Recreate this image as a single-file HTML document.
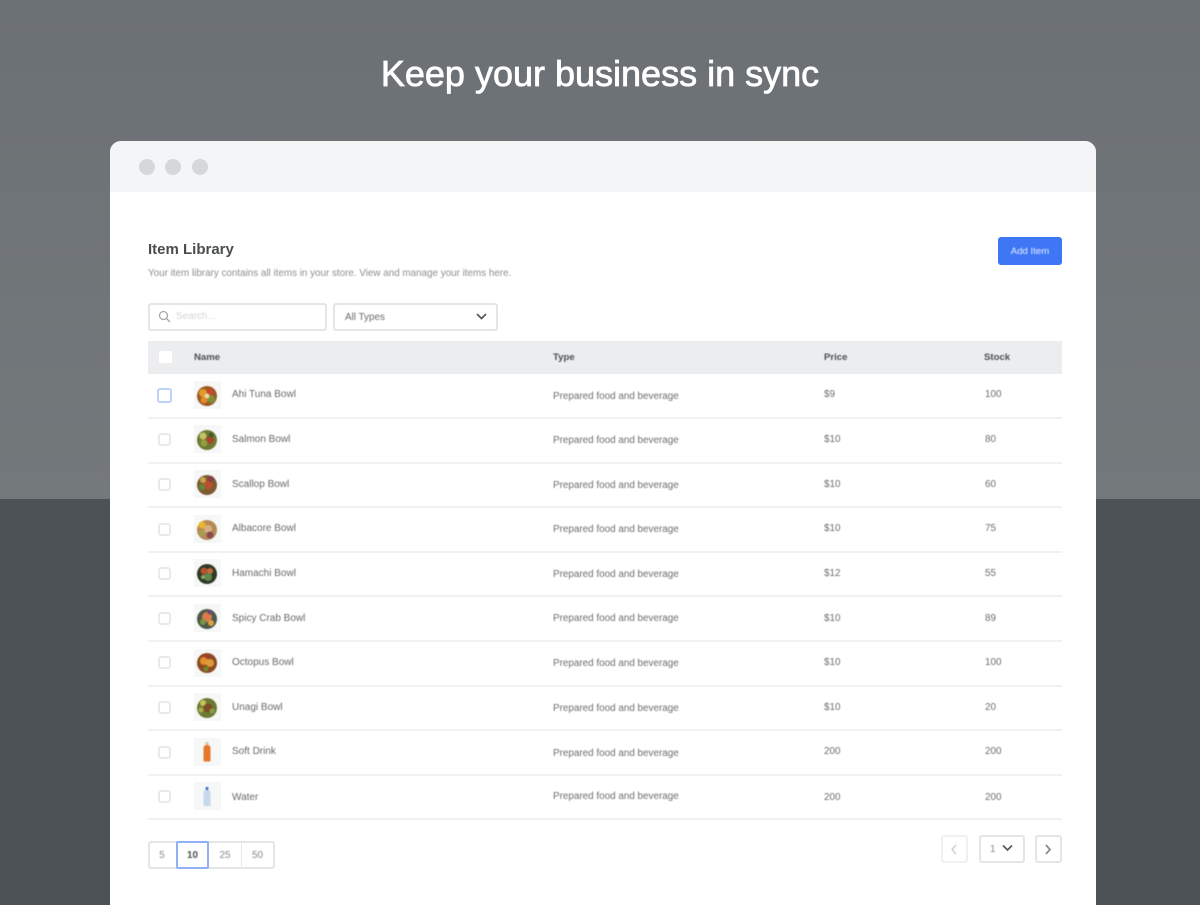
<!DOCTYPE html>
<html><head><meta charset="utf-8"><style>
*{box-sizing:border-box}
html,body{margin:0;padding:0;width:1200px;height:905px;overflow:hidden}
body{font-family:"Liberation Sans",sans-serif}
#p{position:absolute;left:0;top:0;width:1200px;height:905px;overflow:hidden;background:#4d5256}
.a,.t,.l,.c,.th,svg.b{position:absolute}
.top{position:absolute;left:0;top:0;width:1200px;height:499px;background:linear-gradient(#6b7074,#74797c)}
h1{position:absolute;left:0;top:52px;width:1200px;margin:0;text-align:center;color:#fff;font-size:36px;line-height:44px;font-weight:400;-webkit-text-stroke:.75px #fff;filter:blur(.35px)}
.win{position:absolute;left:110px;top:141px;width:986px;height:764px;background:#fff;border-radius:11px 11px 0 0;overflow:hidden}
.bar{position:absolute;left:110px;top:141px;width:986px;height:51px;background:#f3f5f6;border-radius:11px 11px 0 0}
.dot{position:absolute;top:159px;width:16px;height:16px;border-radius:50%;background:#d5d8d9}
.t{font-size:9.9px;line-height:12px;margin-top:1px;color:#6a6d70;white-space:nowrap;filter:blur(.45px)}
.n{font-size:10px;color:#66696c}
.th{font-size:9.6px;line-height:12px;margin-top:1px;color:#4c4f52;font-weight:700;white-space:nowrap;filter:blur(.45px)}
.l{left:148px;width:914px;height:2px;background:#f0f1f2}
.c{left:158px;width:13px;height:13px;border:2px solid #e9ebeb;border-radius:3px;background:#fff}
.im{position:absolute;left:194px;width:27px;height:28px;background:#f6f7f7}
svg.b{left:196px;width:22px;height:22px;filter:blur(.6px)}
.box{position:absolute;background:#fff;border:2px solid #e3e5e6;border-radius:3px}
</style></head><body><div id="p">
<div class="top"></div>
<h1>Keep your business in sync</h1>
<div class="win"></div><div class="bar"></div>
<div class="dot" style="left:139px"></div><div class="dot" style="left:165px"></div><div class="dot" style="left:192px"></div>

<div class="t" style="left:148px;top:240px;font-size:15px;line-height:18px;font-weight:700;color:#4a4d50;filter:blur(.35px)">Item Library</div>
<div class="t" style="left:148px;top:267px;font-size:9.85px;color:#8b8e90">Your item library contains all items in your store. View and manage your items here.</div>

<div class="a" style="left:998px;top:237px;width:64px;height:28px;background:#3e76f6;border-radius:3px"></div>
<div class="t" style="left:998px;top:245px;width:64px;text-align:center;color:#e8efff;font-size:9.6px">Add Item</div>

<div class="box" style="left:148px;top:303px;width:179px;height:28px"></div>
<svg class="a" style="left:158px;top:310px" width="13" height="13" viewBox="0 0 13 13" fill="none" stroke="#a5a8aa" stroke-width="1.3"><circle cx="5.5" cy="5.5" r="4"/><path d="M8.5 8.500l3.500 3.500"/></svg>
<div class="t" style="left:176px;top:310px;color:#d2d4d5">Search...</div>
<div class="box" style="left:333px;top:303px;width:165px;height:28px"></div>
<div class="t" style="left:345px;top:311px;color:#66696c">All Types</div>
<svg class="a" style="left:475px;top:312px" width="13" height="9" viewBox="0 0 13 9" fill="none" stroke="#56595c" stroke-width="1.7"><path d="M2 2l4.500 4.500L11 2"/></svg>

<div class="a" style="left:148px;top:341px;width:914px;height:33px;background:#ebedee"></div>
<div class="a" style="top:351px;left:159px;width:13px;height:12px;background:#fff;border-radius:2px"></div>
<div class="th" style="left:194px;top:351px">Name</div>
<div class="th" style="left:553px;top:351px">Type</div>
<div class="th" style="left:824px;top:351px">Price</div>
<div class="th" style="left:984px;top:351px">Stock</div>

<!-- rows -->
<div class="c" style="top:388px;left:157px;width:15px;height:15px;border-color:#c0d1f9"></div>
<div class="im" style="top:381px"></div>
<svg class="b" style="top:385px" viewBox="0 0 22 22"><circle cx="11" cy="11" r="10" fill="#9a5a22"/><circle cx="7" cy="8" r="4" fill="#e39a2c"/><circle cx="14" cy="7" r="3.500" fill="#c9472a"/><circle cx="15" cy="14" r="4" fill="#7e8f35"/><circle cx="8" cy="15" r="3.500" fill="#e08a30"/><circle cx="11" cy="11" r="2.500" fill="#ecd7a0"/></svg>
<div class="t n" style="left:232px;top:388px">Ahi Tuna Bowl</div>
<div class="t" style="left:553px;top:390px">Prepared food and beverage</div>
<div class="t" style="left:824px;top:388px">$9</div>
<div class="t" style="left:985px;top:388px">100</div>
<div class="l" style="top:417px"></div>

<div class="c" style="top:433px"></div>
<div class="im" style="top:425px"></div>
<svg class="b" style="top:429px" viewBox="0 0 22 22"><circle cx="11" cy="11" r="10" fill="#6e7a30"/><circle cx="7" cy="7" r="3.500" fill="#c2c26a"/><circle cx="14" cy="11" r="4" fill="#a8452c"/><circle cx="8" cy="14" r="3.500" fill="#8fa040"/><circle cx="15" cy="6" r="2.500" fill="#445a2a"/></svg>
<div class="t n" style="left:232px;top:433px">Salmon Bowl</div>
<div class="t" style="left:553px;top:434px">Prepared food and beverage</div>
<div class="t" style="left:824px;top:433px">$10</div>
<div class="t" style="left:985px;top:433px">80</div>
<div class="l" style="top:462px"></div>

<div class="c" style="top:478px"></div>
<div class="im" style="top:470px"></div>
<svg class="b" style="top:474px" viewBox="0 0 22 22"><circle cx="11" cy="11" r="10" fill="#7d5a30"/><circle cx="12" cy="11" r="4.500" fill="#b8502e"/><circle cx="6" cy="13" r="3" fill="#5f8a3c"/><circle cx="15" cy="5" r="3" fill="#8a3d4a"/><circle cx="7" cy="6" r="3" fill="#cfa050"/></svg>
<div class="t n" style="left:232px;top:478px">Scallop Bowl</div>
<div class="t" style="left:553px;top:479px">Prepared food and beverage</div>
<div class="t" style="left:824px;top:478px">$10</div>
<div class="t" style="left:985px;top:478px">60</div>
<div class="l" style="top:506px"></div>

<div class="c" style="top:523px"></div>
<div class="im" style="top:515px"></div>
<svg class="b" style="top:519px" viewBox="0 0 22 22"><circle cx="11" cy="11" r="10" fill="#b58a55"/><circle cx="6" cy="6" r="3.500" fill="#e9b52c"/><circle cx="12" cy="10" r="4" fill="#d8b080"/><circle cx="14" cy="16" r="3.500" fill="#8a4a55"/><circle cx="6" cy="14" r="3" fill="#a3a050"/></svg>
<div class="t n" style="left:232px;top:522px">Albacore Bowl</div>
<div class="t" style="left:553px;top:523px">Prepared food and beverage</div>
<div class="t" style="left:824px;top:522px">$10</div>
<div class="t" style="left:985px;top:522px">75</div>
<div class="l" style="top:551px"></div>

<div class="c" style="top:567px"></div>
<div class="im" style="top:559px"></div>
<svg class="b" style="top:563px" viewBox="0 0 22 22"><circle cx="11" cy="11" r="10" fill="#2f3a28"/><circle cx="8" cy="8" r="3.500" fill="#b8502e"/><circle cx="14" cy="8" r="3" fill="#c76a3c"/><circle cx="12" cy="14" r="4" fill="#5f8a4c"/><circle cx="7" cy="14" r="2" fill="#8aa86a"/></svg>
<div class="t n" style="left:232px;top:567px">Hamachi Bowl</div>
<div class="t" style="left:553px;top:568px">Prepared food and beverage</div>
<div class="t" style="left:824px;top:567px">$12</div>
<div class="t" style="left:985px;top:567px">55</div>
<div class="l" style="top:595px"></div>

<div class="c" style="top:612px"></div>
<div class="im" style="top:604px"></div>
<svg class="b" style="top:608px" viewBox="0 0 22 22"><circle cx="11" cy="11" r="10" fill="#4d5a4a"/><circle cx="11" cy="9" r="5" fill="#dd7a4a"/><circle cx="7" cy="14" r="3" fill="#78953f"/><circle cx="15" cy="15" r="3" fill="#e0a040"/><circle cx="14" cy="4" r="2.500" fill="#6a4a70"/></svg>
<div class="t n" style="left:232px;top:612px">Spicy Crab Bowl</div>
<div class="t" style="left:553px;top:612px">Prepared food and beverage</div>
<div class="t" style="left:824px;top:612px">$10</div>
<div class="t" style="left:985px;top:612px">89</div>
<div class="l" style="top:640px"></div>

<div class="c" style="top:656px"></div>
<div class="im" style="top:649px"></div>
<svg class="b" style="top:652px" viewBox="0 0 22 22"><circle cx="11" cy="11" r="10" fill="#8c4a22"/><circle cx="8" cy="9" r="4" fill="#e0902c"/><circle cx="14" cy="11" r="4" fill="#dd9a3c"/><circle cx="11" cy="4" r="2.500" fill="#a83a2a"/><circle cx="10" cy="17" r="2.500" fill="#6f8a30"/></svg>
<div class="t n" style="left:232px;top:656px">Octopus Bowl</div>
<div class="t" style="left:553px;top:657px">Prepared food and beverage</div>
<div class="t" style="left:824px;top:656px">$10</div>
<div class="t" style="left:985px;top:656px">100</div>
<div class="l" style="top:685px"></div>

<div class="c" style="top:701px"></div>
<div class="im" style="top:693px"></div>
<svg class="b" style="top:697px" viewBox="0 0 22 22"><circle cx="11" cy="11" r="10" fill="#6c7a35"/><circle cx="7" cy="6" r="3" fill="#c9c25a"/><circle cx="12" cy="11" r="4.500" fill="#7f4a28"/><circle cx="5" cy="13" r="2.500" fill="#a8b04a"/><circle cx="16" cy="14" r="2.500" fill="#8aa040"/></svg>
<div class="t n" style="left:232px;top:701px">Unagi Bowl</div>
<div class="t" style="left:553px;top:702px">Prepared food and beverage</div>
<div class="t" style="left:824px;top:701px">$10</div>
<div class="t" style="left:985px;top:701px">20</div>
<div class="l" style="top:729px"></div>

<div class="c" style="top:746px"></div>
<div class="im" style="top:738px"></div>
<svg class="a" style="left:200px;top:741px;filter:blur(.4px)" width="14" height="22" viewBox="0 0 14 22"><rect x="5.600" y="1" width="2.800" height="3" fill="#d9c4a8"/><path d="M3.500 7c0-2 1.500-3 3.500-3s3.500 1 3.500 3v12.500a1 1 0 0 1-1 1h-5a1 1 0 0 1-1-1z" fill="#e5782a"/></svg>
<div class="t n" style="left:232px;top:745px">Soft Drink</div>
<div class="t" style="left:553px;top:747px">Prepared food and beverage</div>
<div class="t" style="left:824px;top:745px">200</div>
<div class="t" style="left:985px;top:745px">200</div>
<div class="l" style="top:774px"></div>

<div class="c" style="top:790px"></div>
<div class="im" style="top:782px"></div>
<svg class="a" style="left:200px;top:785px;filter:blur(.4px)" width="14" height="23" viewBox="0 0 14 23"><rect x="5.700" y="2" width="2.600" height="3" fill="#3f6fc0"/><path d="M3.500 8c0-2 1.500-3 3.500-3s3.500 1 3.500 3v12a1 1 0 0 1-1 1h-5a1 1 0 0 1-1-1z" fill="#c5d8ee"/></svg>
<div class="t n" style="left:232px;top:791px">Water</div>
<div class="t" style="left:553px;top:790px">Prepared food and beverage</div>
<div class="t" style="left:824px;top:791px">200</div>
<div class="t" style="left:985px;top:791px">200</div>
<div class="l" style="top:818px"></div>

<!-- pagination -->
<div class="box" style="left:148px;top:841px;width:127px;height:28px"></div>
<div class="a" style="left:241px;top:842px;width:1px;height:26px;background:#e6e8e9"></div>
<div class="a" style="left:176px;top:841px;width:33px;height:28px;background:#fff;border:2px solid #8fb0f4;border-radius:2px"></div>
<div class="t" style="left:148px;top:849px;width:28px;text-align:center;color:#85888a">5</div>
<div class="t" style="left:176px;top:849px;width:33px;text-align:center;color:#4c4f52;font-weight:700">10</div>
<div class="t" style="left:209px;top:849px;width:32px;text-align:center;color:#85888a">25</div>
<div class="t" style="left:241px;top:849px;width:33px;text-align:center;color:#85888a">50</div>

<div class="box" style="left:941px;top:835px;width:27px;height:28px;border-color:#f0f1f2"></div>
<svg class="a" style="left:949px;top:843px" width="10" height="13" viewBox="0 0 10 13" fill="none" stroke="#d4d6d7" stroke-width="1.700"><path d="M7 2L3 6.500 7 11"/></svg>
<div class="box" style="left:979px;top:835px;width:46px;height:28px"></div>
<div class="t" style="left:990px;top:843px;color:#85888a">1</div>
<svg class="a" style="left:1001px;top:843px" width="13" height="10" viewBox="0 0 13 10" fill="none" stroke="#5a5d60" stroke-width="1.800"><path d="M2 2.500l4.500 4.500L11 2.500"/></svg>
<div class="box" style="left:1035px;top:835px;width:27px;height:28px"></div>
<svg class="a" style="left:1043px;top:843px" width="10" height="13" viewBox="0 0 10 13" fill="none" stroke="#8a8d8f" stroke-width="1.800"><path d="M3 2l4 4.500L3 11"/></svg>
</div></body></html>
